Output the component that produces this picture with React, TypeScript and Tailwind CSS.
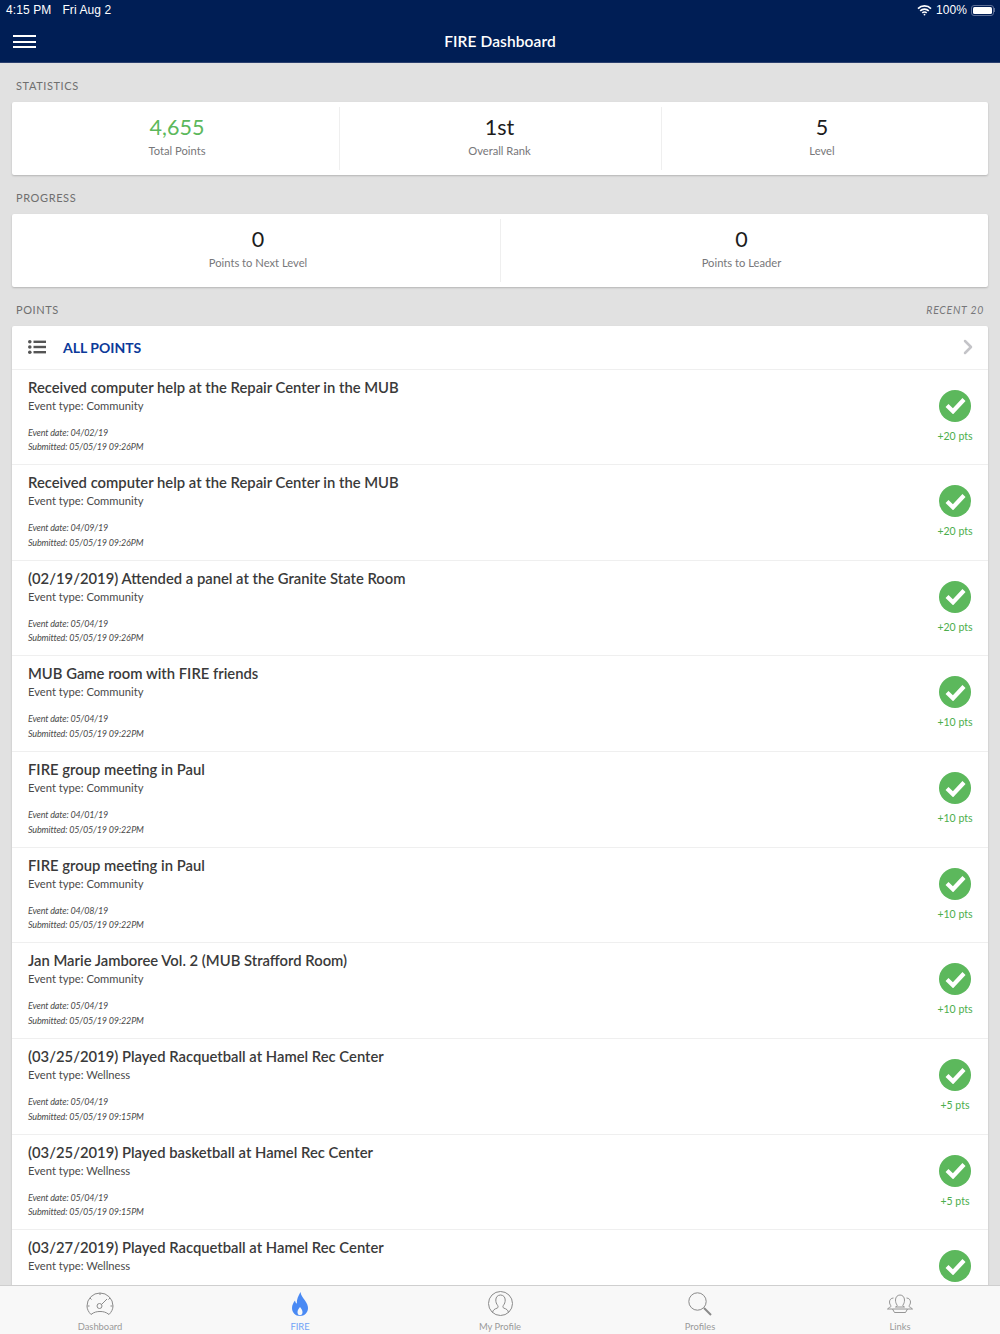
import React from 'react';
import { ChevronRight } from 'lucide-react';

interface PointRow {
  title: string;
  type: string;
  eventDate: string;
  submitted: string;
  pts: number;
}

const rows: PointRow[] = [
  { title: 'Received computer help at the Repair Center in the MUB', type: 'Community', eventDate: '04/02/19', submitted: '05/05/19 09:26PM', pts: 20 },
  { title: 'Received computer help at the Repair Center in the MUB', type: 'Community', eventDate: '04/09/19', submitted: '05/05/19 09:26PM', pts: 20 },
  { title: '(02/19/2019) Attended a panel at the Granite State Room', type: 'Community', eventDate: '05/04/19', submitted: '05/05/19 09:26PM', pts: 20 },
  { title: 'MUB Game room with FIRE friends', type: 'Community', eventDate: '05/04/19', submitted: '05/05/19 09:22PM', pts: 10 },
  { title: 'FIRE group meeting in Paul', type: 'Community', eventDate: '04/01/19', submitted: '05/05/19 09:22PM', pts: 10 },
  { title: 'FIRE group meeting in Paul', type: 'Community', eventDate: '04/08/19', submitted: '05/05/19 09:22PM', pts: 10 },
  { title: 'Jan Marie Jamboree Vol. 2 (MUB Strafford Room)', type: 'Community', eventDate: '05/04/19', submitted: '05/05/19 09:22PM', pts: 10 },
  { title: '(03/25/2019) Played Racquetball at Hamel Rec Center', type: 'Wellness', eventDate: '05/04/19', submitted: '05/05/19 09:15PM', pts: 5 },
  { title: '(03/25/2019) Played basketball at Hamel Rec Center', type: 'Wellness', eventDate: '05/04/19', submitted: '05/05/19 09:15PM', pts: 5 },
  { title: '(03/27/2019) Played Racquetball at Hamel Rec Center', type: 'Wellness', eventDate: '05/04/19', submitted: '05/05/19 09:15PM', pts: 5 },
];

const Stat = ({ value, label, green, className }: { value: string; label: string; green?: boolean; className: string }) => (
  <div className={`flex flex-col items-center pt-[9px] ${className}`}>
    <div className={`text-[21.5px] leading-[32px] ${green ? 'text-[#5cb85c]' : 'text-[#1c1c1c]'}`}>{value}</div>
    <div className="text-[11.2px] leading-[15px] text-[#77777a]">{label}</div>
  </div>
);

const Divider = () => <div className="w-px my-[5px] bg-[#efefef]" />;

const SectionLabel = ({ children }: { children: React.ReactNode }) => (
  <div className="text-[11px] leading-[16px] tracking-[0.6px] text-[#6f6f6f]">{children}</div>
);

const Row = ({ row }: { row: PointRow }) => (
  <div className="h-[95.67px] shrink-0 flex border-b border-[#efefef] pl-[16px] pr-[13px]">
    <div className="flex-1 pt-[7px]">
      <div className="text-[14.8px] leading-[21px] font-semibold text-[#3a3a3a]">{row.title}</div>
      <div className="text-[11.2px] leading-[16px] text-[#4a4a4a]">Event type: {row.type}</div>
      <div className="text-[9px] leading-[14.5px] mt-[12px] italic tracking-[-0.15px] text-[#4a4a4a]">Event date: {row.eventDate}</div>
      <div className="text-[9px] leading-[14.5px] italic tracking-[-0.15px] text-[#4a4a4a]">Submitted: {row.submitted}</div>
    </div>
    <div className="w-[40px] flex flex-col items-center pt-[20px]">
      <div className="w-[32px] h-[32px] rounded-full bg-[#5cb85c] flex items-center justify-center">
        <svg width="21" height="17" viewBox="0 0 21 17" fill="none" stroke="white" strokeWidth="4.2">
          <path d="M2 8.500L8 14.300L19 2.500" />
        </svg>
      </div>
      <div className="text-[10.5px] leading-[15px] mt-[7px] text-[#4cae4c] whitespace-nowrap">+{row.pts} pts</div>
    </div>
  </div>
);

const TabItem = ({ label, active, children }: { label: string; active?: boolean; children: React.ReactNode }) => (
  <div className="flex-1 flex flex-col items-center pt-[3px]">
    <div className="h-[29px] flex items-center justify-center">{children}</div>
    <div className={`text-[9.4px] leading-[12px] mt-[3px] ${active ? 'text-[#6fa3f7]' : 'text-[#9a9a9a]'}`}>{label}</div>
  </div>
);

export default function App() {
  return (
    <div className="w-[1000px] h-[1334px] overflow-hidden flex flex-col bg-[#e1e1e1] font-['Lato',sans-serif]">
      <header className="h-[63px] shrink-0 bg-[#001e55] border-b border-[#2a3f6e] text-white">
        <div className="h-[20px] flex items-center justify-between pl-[6px] pr-[5px] text-[12px] font-['Liberation_Sans',sans-serif] tracking-[0.1px]">
          <div className="flex gap-[11px]">
            <span>4:15 PM</span>
            <span>Fri Aug 2</span>
          </div>
          <div className="flex items-center gap-[4px]">
            <svg width="15" height="11" viewBox="0 0 15 11" fill="none" stroke="white" strokeWidth="1.6">
              <path d="M1 3.6a9.2 9.2 0 0 1 13 0" />
              <path d="M3.2 5.9a6 6 0 0 1 8.6 0" />
              <path d="M5.3 8a3 3 0 0 1 4.4 0" />
              <circle cx="7.5" cy="9.6" r="0.9" fill="white" stroke="none" />
            </svg>
            <span>100%</span>
            <div className="flex items-center">
              <div className="w-[23px] h-[11px] rounded-[3px] border border-[#5c6e96] p-[1px]">
                <div className="w-full h-full bg-white rounded-[1.5px]" />
              </div>
              <div className="w-[1px] h-[4px] bg-[#5c6e96]" />
            </div>
          </div>
        </div>
        <div className="relative h-[42px] flex items-center justify-center">
          <div className="absolute left-[13px] top-[15px] w-[23px] flex flex-col gap-[3.5px]">
            <div className="h-[2px] bg-white" />
            <div className="h-[2px] bg-white" />
            <div className="h-[2px] bg-white" />
          </div>
          <div className="text-[15.5px] font-semibold tracking-[0.1px] mt-[1px]">FIRE Dashboard</div>
        </div>
      </header>

      <main className="flex-1 min-h-0 overflow-hidden px-[12px]">
        <div className="pt-[15px] pl-[4px] h-[39px]">
          <SectionLabel>STATISTICS</SectionLabel>
        </div>
        <div className="h-[73px] flex bg-white rounded-[2px] shadow-[0_1px_2px_rgba(0,0,0,0.2)]">
          <Stat value="4,655" label="Total Points" green className="w-[327px] pl-[3px]" />
          <Divider />
          <Stat value="1st" label="Overall Rank" className="w-[321px] pr-[2px]" />
          <Divider />
          <Stat value="5" label="Level" className="flex-1 pr-[6px]" />
        </div>

        <div className="pt-[15px] pl-[4px] h-[39px]">
          <SectionLabel>PROGRESS</SectionLabel>
        </div>
        <div className="h-[73px] flex bg-white rounded-[2px] shadow-[0_1px_2px_rgba(0,0,0,0.2)]">
          <Stat value="0" label="Points to Next Level" className="w-[488px] pl-[4px]" />
          <Divider />
          <Stat value="0" label="Points to Leader" className="flex-1 pr-[6px]" />
        </div>

        <div className="pt-[15px] px-[4px] h-[39px] flex justify-between">
          <SectionLabel>POINTS</SectionLabel>
          <div className="text-[10.5px] leading-[16px] tracking-[0.7px] italic text-[#77777a]">RECENT 20</div>
        </div>
        <div className="bg-white rounded-t-[2px] shadow-[0_1px_2px_rgba(0,0,0,0.2)]">
          <div className="h-[43.5px] flex items-center border-b border-[#efefef] pl-[16px] pr-[8px]">
            <svg width="18" height="14" viewBox="0 0 18 14" fill="#555555">
              <circle cx="1.8" cy="1.8" r="1.8" />
              <circle cx="1.8" cy="7" r="1.8" />
              <circle cx="1.8" cy="12.2" r="1.8" />
              <rect x="5.5" y="0.6" width="12.5" height="2.4" />
              <rect x="5.5" y="5.8" width="12.5" height="2.4" />
              <rect x="5.5" y="11" width="12.5" height="2.4" />
            </svg>
            <div className="ml-[17px] flex-1 text-[14px] font-bold text-[#0b3a9a]">ALL POINTS</div>
            <ChevronRight size={24} strokeWidth={2.5} className="text-[#c4c4c8]" />
          </div>
          {rows.map((row, i) => (
            <Row key={i} row={row} />
          ))}
        </div>
      </main>

      <nav className="h-[49px] shrink-0 flex bg-[#f8f8f8] border-t border-[#cfcfcf]">
        <TabItem label="Dashboard">
          <svg width="28" height="24" viewBox="0 0 28 24" fill="none" stroke="#8a8a8a" strokeWidth="1">
            <path d="M5 22.5C2.5 20 1 17 1 14a13 13 0 0 1 26 0c0 3-1.500 6-4 8.500C20 20 17 19.500 14 19.500S8 20 5 22.500z" />
            <circle cx="13.500" cy="14" r="2.500" />
            <path d="M15.500 12.500L21 7M14 1v2M4 6l1.500 1.500M24 6l-1.500 1.500M1.500 14h2M24.500 14h2" />
          </svg>
        </TabItem>
        <TabItem label="FIRE" active>
          <svg width="16" height="24" viewBox="0 0 16 24">
            <path fill="#4a8af4" d="M8.500 0c.5 3.500 2.500 5.500 4.500 8.500 1.800 2.700 3 5 3 7.500 0 4.500-3.500 8-8 8s-8-3.500-8-8c0-3 1.500-5.500 3-7.500.3 1.500.8 2.500 1.800 3.200C4.500 7 6.500 3.500 8.500 0z" />
            <path fill="#f8f8f8" d="M8 15c1.300 1.800 2.500 3.300 2.500 5.200 0 1.700-1.100 3-2.500 3s-2.500-1.300-2.500-3C5.500 18.300 6.700 16.800 8 15z" />
          </svg>
        </TabItem>
        <TabItem label="My Profile">
          <svg width="25" height="25" viewBox="0 0 25 25" fill="none" stroke="#8a8a8a" strokeWidth="1">
            <circle cx="12.500" cy="12.500" r="12" />
            <path d="M4.500 21.500c.5-2.500 2-3.500 4.500-4.300 1.300-.5 1.300-1.700.7-2.700-1.300-1.700-1.900-3.300-1.900-5.500 0-3 2-5 4.700-5s4.700 2 4.700 5c0 2.200-.6 3.800-1.900 5.500-.6 1-.6 2.200.7 2.700 2.500.8 4 1.800 4.500 4.300" />
          </svg>
        </TabItem>
        <TabItem label="Profiles">
          <svg width="24" height="24" viewBox="0 0 24 24" fill="none" stroke="#8a8a8a">
            <circle cx="9.500" cy="9.500" r="8.700" strokeWidth="1" />
            <path d="M16 16l7 7" strokeWidth="2" />
          </svg>
        </TabItem>
        <TabItem label="Links">
          <svg width="26" height="20" viewBox="0 0 26 20" fill="none" stroke="#8a8a8a" strokeWidth="0.9">
            <path d="M10 11c-1-1.500-1.500-3-1.500-5 0-3 2-5 4.500-5s4.500 2 4.500 5c0 2-.5 3.500-1.500 5-.5 1 0 1.500 1.500 2h-9c1.500-.5 2-1 1.500-2z" />
            <path d="M5.500 15h15M7.500 18.500h11M5.500 15l2 3.500M20.500 15l-2 3.500" />
            <path d="M6.500 4C4 4 2.500 6 2.500 8c0 1.500.5 2.700 1.300 3.700.4.800 0 1.300-1.300 1.700L.5 15h5" />
            <path d="M19.500 4C22 4 23.500 6 23.500 8c0 1.500-.5 2.700-1.300 3.700-.4.800 0 1.300 1.300 1.700l2 1.600h-5" />
          </svg>
        </TabItem>
      </nav>
    </div>
  );
}
